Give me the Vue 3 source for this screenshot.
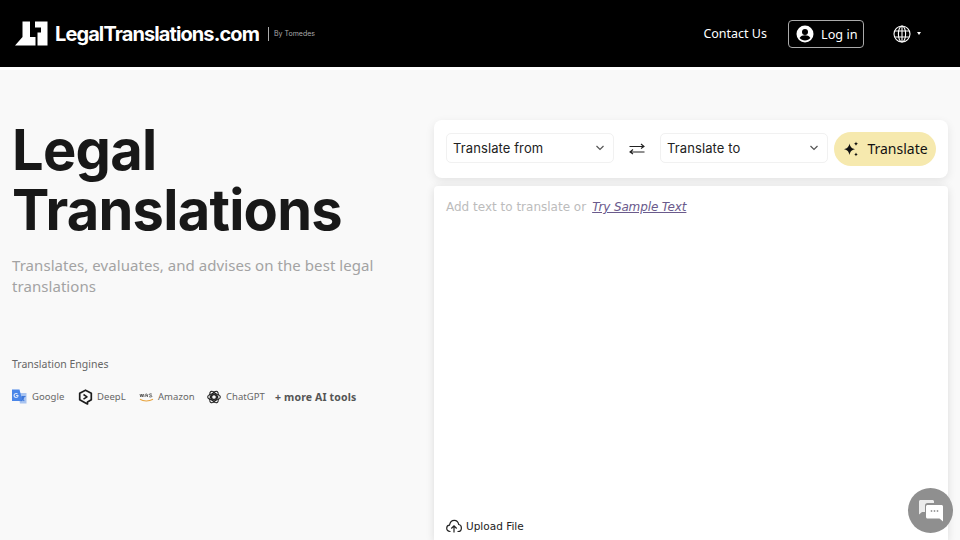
<script setup>
const engines = [
  { name: 'Google', key: 'g' },
  { name: 'DeepL', key: 'd' },
  { name: 'Amazon', key: 'a' },
  { name: 'ChatGPT', key: 'c' }
]
</script>

<template>
  <div class="page">
    <header class="top">
      <div class="brand">
        <svg class="logo" width="33" height="25" viewBox="0 0 33 25">
          <path fill="#fff" d="M7.500 0.500H15V16H20.500V24.500H0L7.500 16z" />
          <path fill="#fff" d="M20 0.500H32.500V24.500H22.500V11.500H26V6.500H20z" />
        </svg>
        <span class="wordmark">LegalTranslations.com</span>
        <span class="by">By Tomedes</span>
      </div>
      <nav class="nav">
        <span class="contact">Contact Us</span>
        <span class="login">
          <svg width="18" height="18" viewBox="0 0 18 18">
            <circle cx="9" cy="9" r="8.500" fill="#fff" />
            <circle cx="9" cy="7" r="3" fill="#000" />
            <path fill="#000" d="M3.600 13c1-2 3.200-2.700 5.400-2.700s4.400.7 5.400 2.700c-1.300 1.500-3.200 2.400-5.400 2.400S4.900 14.500 3.600 13z" />
          </svg>
          Log in
        </span>
        <span class="lang">
          <svg width="18" height="18" viewBox="0 0 18 18" fill="none" stroke="#fff" stroke-width="1.100">
            <circle cx="9" cy="9" r="8" />
            <ellipse cx="9" cy="9" rx="3.600" ry="8" />
            <path d="M1.800 6h14.400M1.800 12h14.400M9 1v16" />
          </svg>
          <i class="caret"></i>
        </span>
      </nav>
    </header>

    <main class="main">
      <section class="intro">
        <h1>Legal<br />Translations</h1>
        <p class="sub">Translates, evaluates, and advises on the best legal translations</p>
        <p class="eng-label">Translation Engines</p>
        <div class="engines">
          <span v-for="e in engines" :key="e.key" class="engine" :class="'e-' + e.key">
            <svg v-if="e.key === 'g'" width="15" height="15" viewBox="0 0 15 15">
              <path fill="#a9c4f0" d="M6 4h8.500v10.500H8z" />
              <path fill="#4a86e8" d="M0 0.500h7.500L10.500 12H0z" />
              <path fill="#dbe7fb" d="M4 4c1 0 1.500.3 1.900.7l-.7.7c-.9-.8-2.500-.2-2.500 1.100s1.700 2 2.500 1c.2-.2.300-.4.300-.6H4V6h2.500c.3 1.900-.8 3-2.500 3-1.400 0-2.500-1.100-2.500-2.500S2.600 4 4 4z" />
              <path fill="#3f78da" d="M9.500 7h4v1h-1l-1 2.500 1 1-.5.7-1.300-1-1.700 1.300-.5-.7 1.700-1.300-.9-1.500z" />
            </svg>
            <svg v-else-if="e.key === 'd'" width="15" height="16" viewBox="0 0 15 16" fill="none" stroke="#1c1c1c" stroke-width="1.700" stroke-linejoin="round">
              <path d="M7.500 1.200l5.800 3v6.500L9.500 13v2l-2-1.100-5.800-3.200V4.200z" />
              <path d="M5.500 5.500L9 7.800l-3.500 2.400" stroke-width="1.500" />
            </svg>
            <svg v-else-if="e.key === 'a'" width="15" height="12" viewBox="0 0 15 12" fill="none">
              <path d="M1 3l.8 3 1-3 1 3 .8-3M6 6l.3-2.400c.1-.8 2-.8 2 0L8.500 6M7 4.700h1.400M10 5.500c1 .8 3 .6 3-.3s-2.800-.8-2.800-1.700 1.800-.8 2.600-.4" stroke="#444" stroke-width=".8" />
              <path d="M1 8.300c3.500 2.200 9 2.200 13 0" stroke="#e8a33d" stroke-width="1.100" />
            </svg>
            <svg v-else width="14" height="14" viewBox="0 0 14 14" fill="none" stroke="#1c1c1c" stroke-width="1.100">
              <circle cx="7" cy="7" r="2.400" />
              <ellipse cx="7" cy="7" rx="6.300" ry="3.200" />
              <ellipse cx="7" cy="7" rx="6.300" ry="3.200" transform="rotate(60 7 7)" />
              <ellipse cx="7" cy="7" rx="6.300" ry="3.200" transform="rotate(120 7 7)" />
            </svg>
            <span>{{ e.name }}</span>
          </span>
          <strong class="more">+ more AI tools</strong>
        </div>
      </section>

      <section class="tool">
        <div class="bar">
          <div class="select from">
            <span>Translate from</span>
            <svg width="10" height="6" viewBox="0 0 10 6" fill="none" stroke="#555" stroke-width="1.200"><path d="M1.500 1l3.500 3.500L8.500 1" /></svg>
          </div>
          <svg class="swap" width="16" height="14" viewBox="0 0 16 14" fill="none" stroke="#222" stroke-width="1.100">
            <path d="M.5 4.500h14.500M12 2l3 2.500-3 2M15.500 10H1M4 7.500L1 10l3 2" />
          </svg>
          <div class="select to">
            <span>Translate to</span>
            <svg width="10" height="6" viewBox="0 0 10 6" fill="none" stroke="#555" stroke-width="1.200"><path d="M1.500 1l3.500 3.500L8.500 1" /></svg>
          </div>
          <button class="go">
            <svg width="16" height="16" viewBox="0 0 16 16" fill="#111">
              <path d="M6.500 2.500C7.300 6 8.500 7.300 12 8.200 8.500 9 7.300 10.300 6.500 14 5.700 10.300 4.500 9 1 8.200 4.500 7.300 5.700 6 6.500 2.500z" />
              <path d="M13 .5c.3 1.400.8 1.900 2.200 2.200-1.400.3-1.900.8-2.200 2.200-.3-1.400-.8-1.900-2.200-2.200 1.400-.3 1.900-.8 2.200-2.200zM13 11.500c.3 1.200.7 1.600 1.900 1.900-1.200.3-1.600.7-1.900 1.900-.3-1.200-.7-1.600-1.900-1.900 1.200-.3 1.600-.7 1.900-1.900z" />
            </svg>
            Translate
          </button>
        </div>
        <div class="editor">
          <div class="hint">
            <span>Add text to translate or</span>
            <a class="sample">Try Sample Text</a>
          </div>
          <div class="upload">
            <svg width="16" height="14" viewBox="0 0 16 14" fill="none" stroke="#222" stroke-width="1.200">
              <path d="M4.500 12.500H4C2 12.500.7 11 .7 9.300S2 6.300 3.500 6.200C4 3.400 6 1.300 8.300 1.300c2.300 0 4 1.800 4.400 4.200 1.700.2 2.700 1.800 2.700 3.400 0 2-1.400 3.600-3.400 3.600h-.5" />
              <path d="M8 13.500V7M5.300 9.500L8 6.800l2.700 2.700" />
            </svg>
            Upload File
          </div>
        </div>
      </section>
    </main>

    <div class="chat">
      <svg width="24" height="22" viewBox="0 0 24 22">
        <path fill="#ececec" d="M0 1.500C0 .7.700 0 1.500 0h12c.8 0 1.500.7 1.500 1.500V3H8.500C7 3 6 4 6 5.500V12H3l-3 2.500z" />
        <path fill="#fff" d="M8.500 5h14c.8 0 1.500.7 1.500 1.500v15l-3.500-3h-12C7.700 18.500 7 17.800 7 17V6.500C7 5.700 7.700 5 8.500 5z" />
        <circle cx="12.500" cy="11" r=".9" fill="#999" /><circle cx="15.500" cy="11" r=".9" fill="#999" /><circle cx="18.500" cy="11" r=".9" fill="#999" />
      </svg>
    </div>
  </div>
</template>

<style>
html, body { margin: 0; overflow: hidden; background: #f9f9f9; }
</style>

<style scoped>
.page { width: 960px; height: 540px; overflow: hidden; display: flex; flex-direction: column; background: #f9f9f9; font-family: "Noto Sans", sans-serif; position: relative; }
.top { height: 67px; flex: none; background: #000; display: flex; align-items: center; justify-content: space-between; padding: 0 39px 0 15px; box-sizing: border-box; }
.brand { display: flex; align-items: center; }
.logo { margin-right: 7px; }
.wordmark { color: #fff; font: 700 20px/1 Inter, sans-serif; letter-spacing: -0.9px; }
.by { color: #aaa; font: 400 7px/14px Inter, sans-serif; border-left: 1px solid #aaa; margin-left: 9px; padding-left: 5px; }
.nav { display: flex; align-items: center; color: #fff; font-size: 12.500px; }
.contact { margin-right: 21px; }
.login { display: flex; align-items: center; gap: 7px; width: 76px; height: 28px; box-sizing: border-box; border: 1px solid #aaa; border-radius: 4px; padding-left: 7px; font-size: 12.700px; }
.lang { display: flex; align-items: center; margin-left: 29px; gap: 6px; }
.caret { width: 0; height: 0; border: 2.500px solid transparent; border-top: 3px solid #fff; border-bottom: 0; }
.main { flex: 1; display: flex; border-top: 3px solid #fff; padding: 50px 12px 0 12px; min-height: 0; }
.intro { width: 422px; flex: none; }
h1 { margin: 0; font: 700 56px/60px Inter, sans-serif; letter-spacing: -0.75px; color: #181818; }
.sub { margin: 15px 0 0; width: 380px; font-size: 15px; line-height: 21px; color: #a3a3a3; letter-spacing: 0.06px; }
.eng-label { margin: 60px 0 0; font-size: 10.500px; line-height: 15px; color: #666; }
.engines { display: flex; align-items: center; margin-top: 16px; height: 17px; }
.engine { display: flex; align-items: center; gap: 5px; font-size: 9.500px; color: #666; letter-spacing: 0.05px; }
.e-g { width: 66px; gap: 5px; }
.e-d { width: 61px; gap: 4px; }
.e-a { width: 68px; gap: 4px; }
.e-c { width: 68px; }
.more { font-size: 10.500px; font-weight: 700; color: #555; letter-spacing: 0.15px; }
.tool { flex: 1; display: flex; flex-direction: column; gap: 8px; }
.bar { height: 58px; flex: none; background: #fff; border-radius: 8px; box-shadow: 0 3px 10px rgba(0,0,0,.09); display: flex; align-items: center; padding: 0 12px; box-sizing: border-box; }
.select { height: 30px; box-sizing: border-box; border: 1px solid #f1f1f1; border-radius: 5px; display: flex; align-items: center; justify-content: space-between; padding: 0 8px 0 6px; margin-bottom: 2px; font: 400 13px/1 Inter, sans-serif; color: #222; letter-spacing: .1px; }
.from { width: 168px; }
.to { width: 168px; }
.swap { margin: 0 15px; flex: none; }
.go { margin-left: 6px; width: 102px; height: 34px; border: 0; border-radius: 17px; background: #f6e9ae; display: flex; align-items: center; justify-content: center; gap: 8px; font: 400 14px/1 "Noto Sans", sans-serif; color: #111; padding: 0 0 0 1px; }
.editor { flex: 1; min-height: 0; background: #fff; border-radius: 4px 4px 0 0; box-shadow: 0 2px 8px rgba(0,0,0,.12); padding: 12px 12px 0; display: flex; flex-direction: column; justify-content: space-between; }
.hint { display: flex; gap: 6px; font: 400 12px/18px "DejaVu Sans", sans-serif; color: #bcbcbc; }
.sample { font-style: italic; color: #6a5a8c; text-decoration: underline; letter-spacing: -.12px; }
.upload { display: flex; align-items: center; gap: 4px; font: 400 10.500px/16px "DejaVu Sans", sans-serif; color: #222; margin-bottom: 6px; }
.chat { position: absolute; right: 7px; bottom: 7px; width: 45px; height: 45px; border-radius: 50%; background: #8f8f8f; display: flex; align-items: center; justify-content: center; }
</style>
